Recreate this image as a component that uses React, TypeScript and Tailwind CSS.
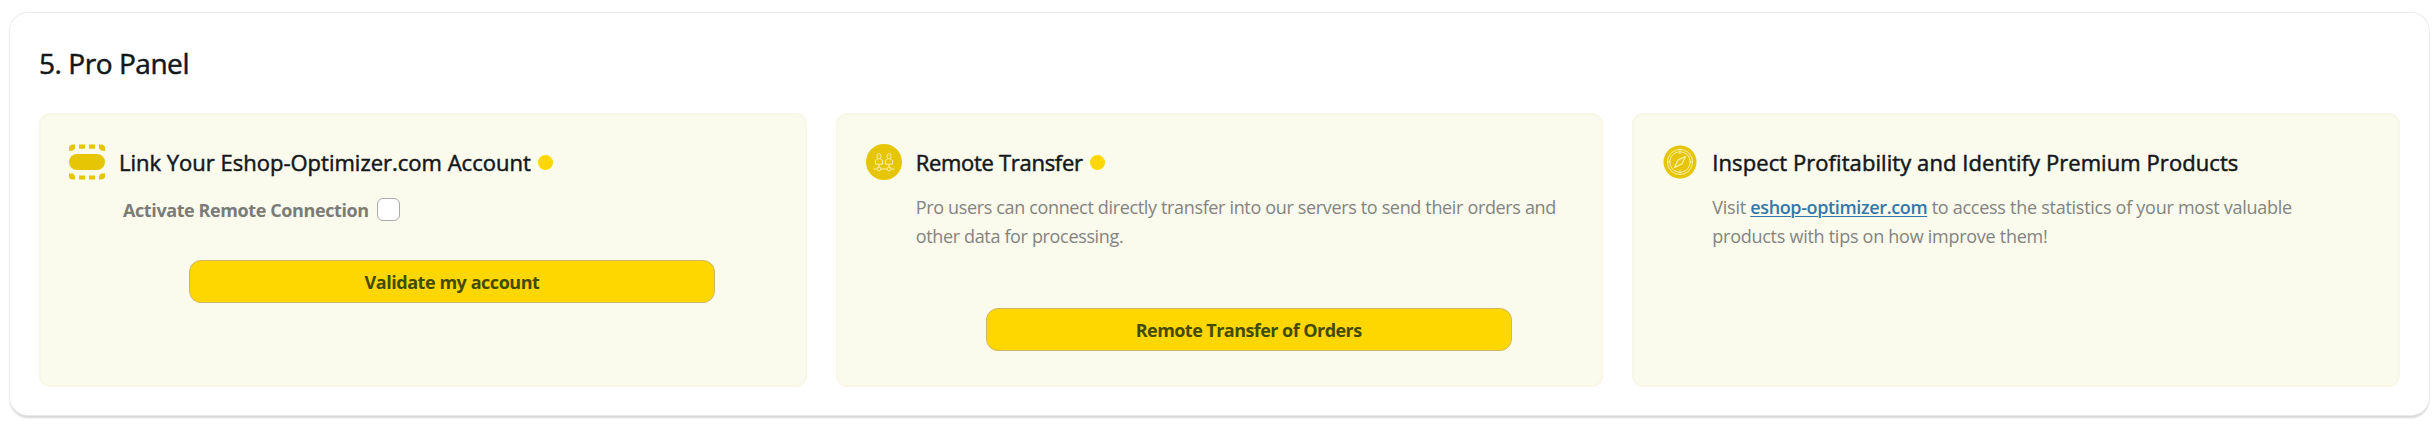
import type { ReactNode } from "react";

function AccountIcon() {
  return (
    <svg width="36" height="36" viewBox="0 0 36 36" fill="#e6c505">
      <rect x="0" y="10" width="36" height="16" rx="8" />
      <path d="M0 7V4Q0 .5 4 .5H6V4.500L4 6.500Z" />
      <path d="M36 7V4Q36 .5 32 .5H30V4.500L32 6.500Z" />
      <path d="M0 29.500V32.500Q0 35.500 4 35.500H6V32L4 29.500Z" />
      <path d="M36 29.500V32.500Q36 35.500 32 35.500H30V32L32 29.500Z" />
      <rect x="10" y=".5" width="6" height="4.200" />
      <rect x="20" y=".5" width="6" height="4.200" />
      <rect x="10" y="31.500" width="6" height="4" />
      <rect x="20" y="31.500" width="6" height="4" />
    </svg>
  );
}

function TransferIcon() {
  return (
    <svg width="36" height="36" viewBox="0 0 36 36" fill="none" stroke="#f8efac" strokeWidth="1">
      <circle cx="18" cy="18" r="18" fill="#e6c505" stroke="none" />
      <ellipse cx="13" cy="12.300" rx="2" ry="2.600" />
      <ellipse cx="23" cy="12.300" rx="2" ry="2.600" />
      <path d="M11.800 15L9.500 16.500V20.200H16.500V16.500L14.200 15M21.800 15L19.500 16.500V20.200H26.500V16.500L24.200 15" />
      <path d="M13 20.200V23.200M23 20.200V23.200M7.500 25H11M15 25H21M25 25H28.500" />
      <circle cx="13" cy="25" r="1.900" />
      <circle cx="23" cy="25" r="1.900" />
    </svg>
  );
}

function CompassIcon() {
  return (
    <svg className="ml-px" width="34" height="34" viewBox="0 0 34 34" fill="none" stroke="#f8eea6" strokeWidth="1">
      <circle cx="17" cy="17" r="16.500" fill="#e6c505" stroke="none" />
      <circle cx="17" cy="17" r="12.600" />
      <circle cx="17" cy="17" r="10.300" />
      <path d="M17 4.500V9M17 25V29.500M4.500 17H8M26 17H29.500" />
      <path d="M22.500 11.500L19 18.800L11.500 22.500L15 15.200Z" strokeWidth="1.300" strokeLinejoin="round" />
    </svg>
  );
}

function Card({ icon, title, titleClass, dot, children }: { icon: ReactNode; title: string; titleClass: string; dot?: boolean; children: ReactNode }) {
  return (
    <section className="flex h-[274px] flex-1 rounded-[11px] border-2 border-[#f9f7e7] bg-[#fafaed] pt-7 pr-7 pl-7">
      <div className="flex h-[37px] w-[50px] shrink-0 items-center">{icon}</div>
      <div className="min-w-0 flex-1">
        <div className="flex h-[38px] items-center">
          <h3 className={"whitespace-nowrap text-[22px] leading-[38px] text-[#14171a] [-webkit-text-stroke:0.5px_#14171a] " + titleClass}>{title}</h3>
          {dot && <span className="ml-[7px] size-[15px] rounded-full bg-[#ffd700]" />}
        </div>
        {children}
      </div>
    </section>
  );
}

function ActionButton({ children }: { children: ReactNode }) {
  return (
    <button className="ml-[70px] flex h-[43px] w-[526px] items-center justify-center rounded-xl border border-[#cfb765] bg-[#ffd700] text-lg font-bold text-[#434b08]">
      {children}
    </button>
  );
}

export default function App() {
  return (
    <main className="h-[434px] bg-white pt-[13px] pr-[6px] pl-[10px] font-['Open_Sans','Noto_Sans',sans-serif]">
      <div className="h-[402px] rounded-[18px] bg-white px-[29px] shadow-[0_0_1px_1px_#ebebeb,0_3px_2px_0_#d6d6d6]">
        <h2 className="pt-[29px] text-[28px] leading-[42px] tracking-[-0.45px] text-[#14171a] [-webkit-text-stroke:0.5px_#14171a]">5. Pro Panel</h2>
        <div className="mt-[29px] flex gap-[29px]">
          <Card icon={<AccountIcon />} title="Link Your Eshop-Optimizer.com Account" titleClass="" dot>
            <label className="mt-[17px] ml-1 flex h-[23px] items-center text-lg font-bold tracking-[-0.4px] text-[#7b7c78]">
              Activate Remote Connection
              <input type="checkbox" className="ml-2 size-[23px] appearance-none rounded-md border border-[#a9a9ae] bg-white" />
            </label>
            <div className="mt-[39px]">
              <ActionButton><span className="tracking-[-0.45px]">Validate my account</span></ActionButton>
            </div>
          </Card>
          <Card icon={<TransferIcon />} title="Remote Transfer" titleClass="tracking-[-0.3px]" dot>
            <p className="mt-[12px] text-lg leading-[28.5px] tracking-[-0.345px] whitespace-nowrap text-[#83847f]">
              Pro users can connect directly transfer into our servers to send their orders and
              <br />
              other data for processing.
            </p>
            <div className="mt-[58px]">
              <ActionButton><span className="tracking-[-0.55px]">Remote Transfer of Orders</span></ActionButton>
            </div>
          </Card>
          <Card icon={<CompassIcon />} title="Inspect Profitability and Identify Premium Products" titleClass="tracking-[0.07px]">
            <p className="mt-[12px] text-lg leading-[28.5px] tracking-[-0.27px] whitespace-nowrap text-[#83847f]">
              Visit <a href="#" className="font-semibold tracking-[-0.36px] text-[#3377aa] underline decoration-1 underline-offset-2">eshop-optimizer.com</a> to access the statistics of your most valuable
              <br />
              products with tips on how improve them!
            </p>
          </Card>
        </div>
      </div>
    </main>
  );
}
